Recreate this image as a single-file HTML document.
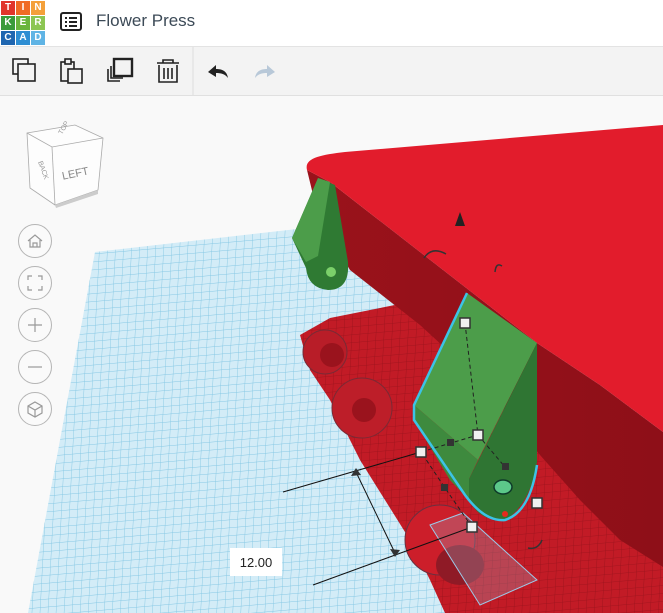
<!DOCTYPE html>
<html><head><meta charset="utf-8"><style>
body{margin:0;width:663px;height:613px;overflow:hidden;background:#f9f9f9;font-family:"Liberation Sans",sans-serif;position:relative}
#hdr{position:absolute;left:0;top:0;width:663px;height:46px;background:#fff;border-bottom:1px solid #e3e3e3}
#tb{position:absolute;left:0;top:47px;width:663px;height:48px;background:#f3f3f3;border-bottom:1px solid #e0e0e0}
.lg{position:absolute;width:14px;height:14px;color:#fff;font-size:10px;font-weight:bold;text-align:center;line-height:14px}
#title{position:absolute;left:96px;top:11px;font-size:17px;color:#3c4a57}
</style></head><body>
<div id="hdr">
<div class="lg" style="left:1px;top:1px;background:#e1352b">T</div>
<div class="lg" style="left:16px;top:1px;background:#f06b24">I</div>
<div class="lg" style="left:31px;top:1px;background:#f4a03a">N</div>
<div class="lg" style="left:1px;top:16px;background:#3a9b3a">K</div>
<div class="lg" style="left:16px;top:16px;background:#6ab53d">E</div>
<div class="lg" style="left:31px;top:16px;background:#8cc653">R</div>
<div class="lg" style="left:1px;top:31px;background:#1f66b0">C</div>
<div class="lg" style="left:16px;top:31px;background:#2e8ed3">A</div>
<div class="lg" style="left:31px;top:31px;background:#5fb4e5">D</div>
<svg style="position:absolute;left:60px;top:12px" width="22" height="20"><rect x="1" y="1" width="20" height="17" rx="2" fill="none" stroke="#222" stroke-width="2"/><rect x="5" y="5" width="2" height="2" fill="#222"/><rect x="9" y="5" width="8" height="2" fill="#222"/><rect x="5" y="9" width="2" height="2" fill="#222"/><rect x="9" y="9" width="8" height="2" fill="#222"/><rect x="5" y="13" width="2" height="2" fill="#222"/><rect x="9" y="13" width="8" height="2" fill="#222"/></svg>
<div id="title">Flower Press</div>
</div>
<div id="tb">
<svg width="663" height="48" style="position:absolute;left:0;top:0">
<g fill="none" stroke="#222" stroke-width="1.6">
<rect x="13" y="12" width="15" height="15"/><rect x="18" y="17" width="17" height="17" fill="#f3f3f3"/>
<rect x="61" y="15" width="13" height="19"/><rect x="65" y="12" width="6" height="5" fill="#f3f3f3"/><rect x="68" y="22" width="14" height="14" fill="#f3f3f3"/>
<path d="M108 22v12h12"/><path d="M111 19v12h12"/><rect x="114" y="12" width="18" height="17" stroke-width="2.4"/>
<path d="M157 16h22M163 16v-3h10v3M159 18v17h18v-17M164 21v11M168 21v11M172 21v11"/>
</g>
<path d="M208 25l8-7v4c6 0 11 2 12 9c-3-4-7-5-12-5v4z" fill="#222"/>
<path d="M275 25l-8-7v4c-6 0-11 2-12 9c3-4 7-5 12-5v4z" fill="#b8c8d8"/>
<line x1="193" y1="0" x2="193" y2="48" stroke="#ddd"/>
</svg>
</div>
<svg width="663" height="517" style="position:absolute;left:0;top:96px" viewBox="0 96 663 517">
<defs>
<pattern id="g" width="8" height="8" patternUnits="userSpaceOnUse" patternTransform="skewX(-8) rotate(-5)"><rect width="8" height="8" fill="#d3ecf7"/><path d="M0 0H8M0 0V8" stroke="#86c8e4" stroke-width="0.9"/></pattern>
<pattern id="gr" width="8" height="8" patternUnits="userSpaceOnUse" patternTransform="skewX(-8) rotate(-5)"><rect width="8" height="8" fill="#c21b26"/><path d="M0 0H8M0 0V8" stroke="#9a131c" stroke-width="0.8"/></pattern>
<linearGradient id="sd" x1="0" y1="0" x2="1" y2="0"><stop offset="0" stop-color="#9a121b"/><stop offset="1" stop-color="#8e0f18"/></linearGradient>
</defs>
<polygon points="95,252 420,215 663,400 663,613 28,613 60,440" fill="url(#g)"/>
<polygon points="300,335 330,318 420,300 663,450 663,613 445,613 430,580 410,540 360,460 330,400 310,370" fill="url(#gr)"/>
<circle cx="325" cy="352" r="22" fill="#b81d28" stroke="#7a2a35"/>
<circle cx="332" cy="355" r="12" fill="#9a131d"/>
<circle cx="362" cy="408" r="30" fill="#bd1e29" stroke="#7a2a35"/>
<circle cx="364" cy="410" r="12" fill="#9a131d"/>
<circle cx="440" cy="540" r="35" fill="#cc1e2a" stroke="#6a3040"/>
<ellipse cx="460" cy="565" rx="24" ry="20" fill="#8f1a26"/>
<polygon points="307,170 330,182 537,343 600,385 663,432 663,567 620,540 580,500 540,455 480,380 420,325 350,270 318,215" fill="url(#sd)"/>
<path d="M307,170 C304,158 320,155 345,152 L663,125 L663,432 L600,385 L537,343 L330,182 Z" fill="#e21c2c"/>
<path d="M292,238 L318,178 L335,185 L348,262 Q350,290 328,290 Q308,288 306,268 Z" fill="#2f7a33"/>
<polygon points="292,238 318,178 330,182 318,256 306,262" fill="#4c9d4a"/>
<circle cx="331" cy="272" r="5" fill="#7bd06a"/>
<polygon points="467,293 537,343 478,460 414,405" fill="#4c9d4a"/>
<polygon points="414,405 478,460 469,479 469,500 450,480 414,420" fill="#3e8a3e"/>
<path d="M537,343 L537,462 Q530,505 505,520 Q480,522 469,500 L469,479 Z" fill="#2f7533"/>
<path d="M467,293 L414,405 L414,420 L465,495 Q485,522 505,520 Q530,512 537,465" fill="none" stroke="#3cc3e6" stroke-width="2.5"/>
<ellipse cx="503" cy="487" rx="9" ry="7" fill="#5cc88a" stroke="#0e3a2a" stroke-width="1.5"/>
<polygon points="430,525 463,513 537,580 480,605" fill="rgba(160,190,220,0.25)" stroke="#9cc9e8"/>
<g stroke="#222" fill="none" stroke-dasharray="4,3"><path d="M465,323 L478,435 L451,443 L421,452 L445,488 L472,527"/><path d="M478,435 L505,467"/></g>
<g stroke="#111" stroke-width="1"><line x1="283" y1="492" x2="421" y2="452"/><line x1="313" y1="585" x2="472" y2="527"/><line x1="356" y1="472" x2="395" y2="553"/></g>
<polygon points="356,468 351,476 361,475" fill="#333"/><polygon points="395,557 390,549 400,550" fill="#333"/>
<g fill="#f0f0f0" stroke="#333" stroke-width="1.5"><rect x="460" y="318" width="10" height="10"/><rect x="473" y="430" width="10" height="10"/><rect x="416" y="447" width="10" height="10"/><rect x="467" y="522" width="10" height="10"/><rect x="532" y="498" width="10" height="10"/></g>
<g fill="#333"><rect x="447" y="439" width="7" height="7"/><rect x="502" y="463" width="7" height="7"/><rect x="441" y="484" width="7" height="7"/></g>
<circle cx="505" cy="514" r="3" fill="#e52a1e"/>
<polygon points="460,212 455,226 465,226" fill="#222"/>
<path d="M424,258 Q432,246 446,254" stroke="#333" fill="none" stroke-width="1.5"/><path d="M495,272 Q496,262 502,266" stroke="#333" fill="none" stroke-width="1.5"/>
<path d="M528,548 Q538,550 542,540" stroke="#333" fill="none" stroke-width="1.5"/>
<rect x="230" y="548" width="52" height="28" fill="#fff"/>
<text x="256" y="567" font-size="13" text-anchor="middle" fill="#222" font-family="Liberation Sans">12.00</text>
<g>
<polygon points="27,133 75,125 103,138 98,190 55,205 30,188" fill="#fdfdfd" stroke="#aaa" stroke-width="0.8"/>
<polyline points="27,133 52,147 103,138" fill="none" stroke="#aaa" stroke-width="0.8"/><line x1="52" y1="147" x2="55" y2="205" stroke="#aaa" stroke-width="0.8"/>
<polygon points="55,205 98,190 98,194 56,208" fill="#ccc"/>
<text x="76" y="177" font-size="11" fill="#888" transform="rotate(-12 76 177)" text-anchor="middle">LEFT</text>
<text x="38" y="162" font-size="7" fill="#999" transform="rotate(70 38 162)">BACK</text>
<text x="62" y="135" font-size="7" fill="#999" transform="rotate(-60 62 135)">TOP</text>
</g>
<g fill="#fafafa" stroke="#b5b5b5" stroke-width="1"><circle cx="35" cy="241" r="16.5"/><circle cx="35" cy="283" r="16.5"/><circle cx="35" cy="325" r="16.5"/><circle cx="35" cy="367" r="16.5"/><circle cx="35" cy="409" r="16.5"/></g>
<g fill="none" stroke="#999" stroke-width="1.2"><path d="M28,241 L35,235 L42,241 M30,240 v7 h10 v-7 M33,247 v-4 h4 v4"/><path d="M28,280v-4h4M38,276h4v4M42,286v4h-4M32,290h-4v-4"/><path d="M28,325h14M35,318v14"/><path d="M28,367h14"/><path d="M35,402l7,4v7l-7,4l-7-4v-7z M28,406l7,4l7-4M35,410v7"/></g>
</svg>
</body></html>
